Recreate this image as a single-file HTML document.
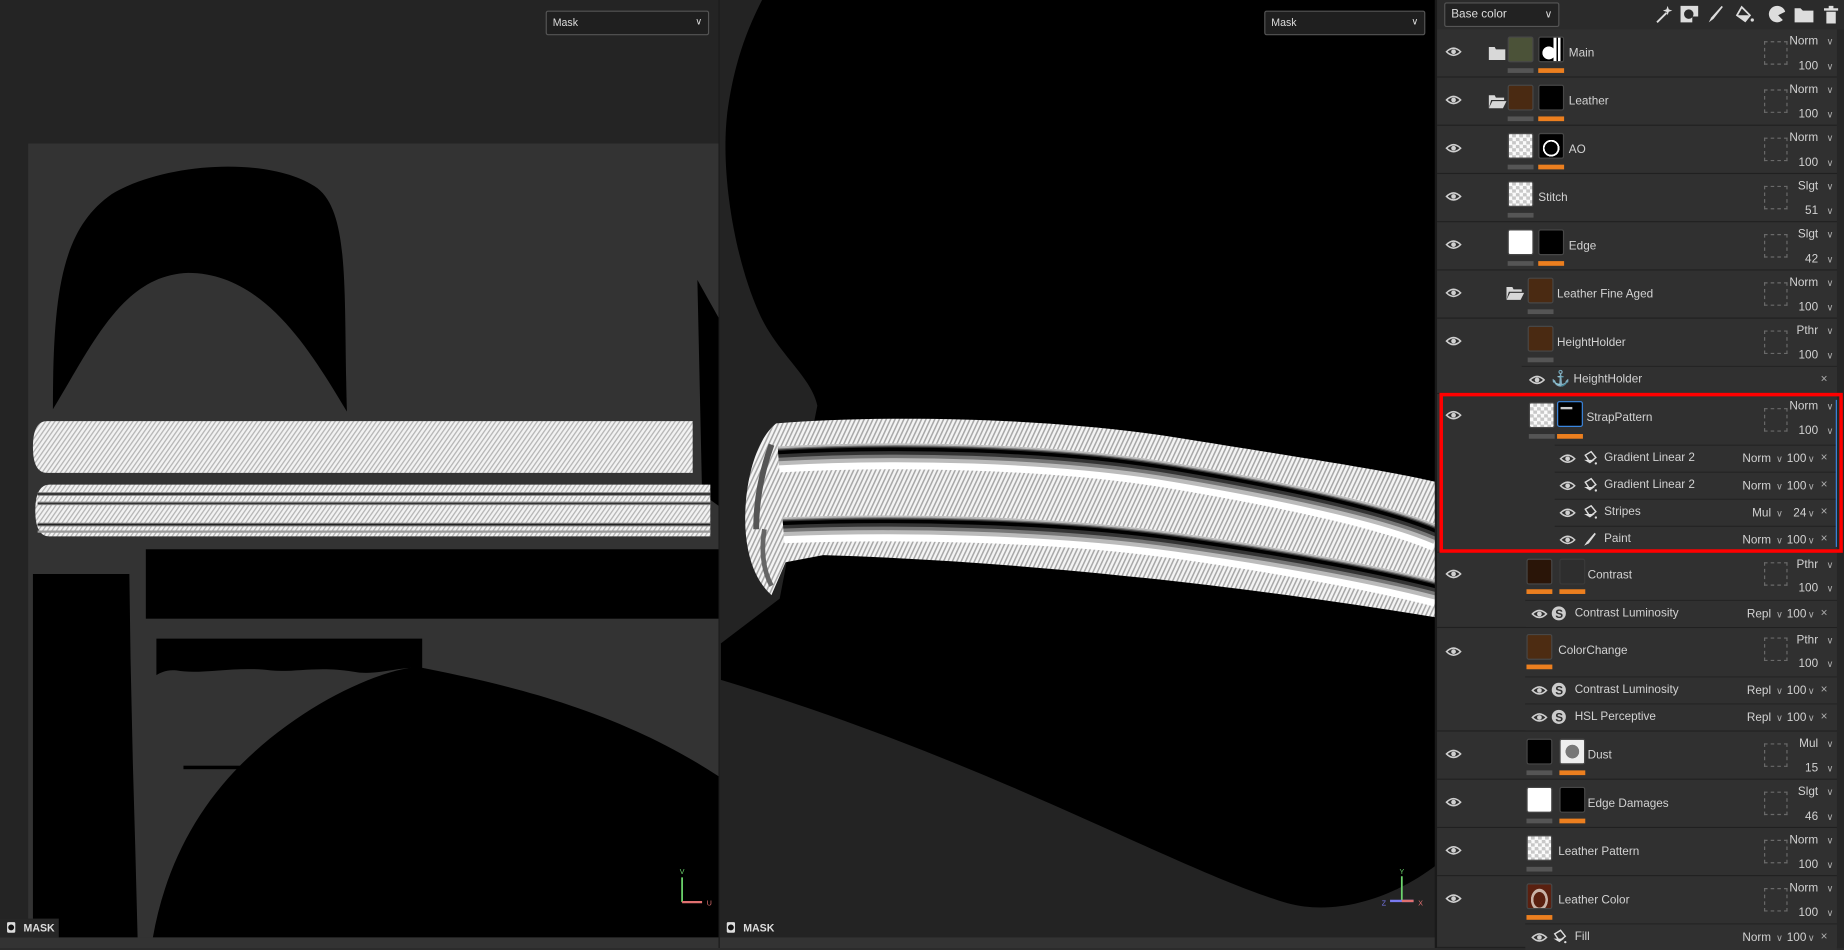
<!DOCTYPE html>
<html><head><meta charset="utf-8"><style>
*{margin:0;padding:0;box-sizing:border-box}
html,body{width:1844px;height:948px;overflow:hidden;background:#2b2b2b}
#root{position:absolute;left:0;top:0;width:1568px;height:806px;transform:scale(1.17602,1.17618);transform-origin:0 0;font-family:"Liberation Sans",sans-serif;font-size:10px;color:#d2d2d2}
.a{position:absolute}
.dd{position:absolute;background:#1f1f1f;border:1px solid #555;border-radius:2px;color:#ddd;font-size:9px;padding:4px 5px}
.dd i{position:absolute;right:5px;top:4px;font-style:normal;font-size:8px}
.row{position:absolute;left:1222px;width:340px;background:#303030;border-bottom:1px solid #202020}
.row>*{position:absolute}
.th{width:22px;height:22px;top:6px;border-radius:2px;border:1px solid #474747}
.chk{background:conic-gradient(#c8c8c8 25%,#fafafa 0 50%,#c8c8c8 0 75%,#fafafa 0) 0 0/6px 6px}
.br{background:#4a2a12}
.bk{background:#000}
.wh{background:#fff}
.gb{top:33px;width:22px;height:4px;background:#555}
.ob{top:33px;width:22px;height:4px;background:#ec7f1f}
.nm{top:15px;font-size:10px}
.sq{left:278px;top:10px;width:20px;height:20px;border:1px dashed #6a6a6a}
.bl{right:16px;top:5px;font-size:10px;text-align:right}
.vl{right:16px;top:26px;font-size:10px;text-align:right}
.cv{right:3px;font-size:8px;color:#aaa}
.eye{left:7px;top:14px}
.sub{position:absolute;height:23px;border-top:1px solid #242424;background:#303030}
.sub>*{position:absolute}
.sub .n{top:5px}
.sub .b{top:6px;right:56px;text-align:right}
.sub .v{top:6px;right:26px;text-align:right}
.sub .x{top:5px;right:8px;color:#aaa}
.sub .c1{top:7px;right:46px;font-size:8px;color:#aaa}
.sub .c2{top:7px;right:19px;font-size:8px;color:#aaa}
</style></head><body><div id="root">

<!-- LEFT VIEWPORT -->
<svg class="a" style="left:0;top:0" width="612" height="806" viewBox="0 0 612 806">
<defs>
<pattern id="dg" width="3.2" height="3.2" patternUnits="userSpaceOnUse" patternTransform="rotate(35)"><rect width="3.2" height="3.2" fill="#f2f2f2"/><rect width="1.1" height="3.2" fill="#b5b5b5"/></pattern>
</defs>
<rect width="612" height="806" fill="#242424"/>
<rect x="0" y="797" width="612" height="9" fill="#333"/>
<rect x="24" y="122" width="587" height="675" fill="#333"/>
<path d="M45,348 C45,250 52,195 95,165 C140,138 230,132 270,160 C298,182 292,250 295,350 C265,300 225,232 160,232 C105,234 80,290 45,348 Z" fill="#000"/>
<path d="M593,238 L611,270 L611,430 L597,420 Z" fill="#000"/>
<path d="M40,358 L589,358 L589,402 L40,402 Q28,402 28,380 Q28,358 40,358 Z" fill="url(#dg)"/>
<path d="M42,412 L604,412 L604,456 L42,456 Q30,456 30,434 Q30,412 42,412 Z" fill="url(#dg)"/>
<g stroke-linecap="butt">
<line x1="32" y1="420" x2="604" y2="420" stroke="#777" stroke-width="3"/>
<line x1="32" y1="420" x2="604" y2="420" stroke="#222" stroke-width="1.2"/>
<line x1="32" y1="428" x2="604" y2="428" stroke="#888" stroke-width="3"/>
<line x1="32" y1="428" x2="604" y2="428" stroke="#333" stroke-width="1.2"/>
<line x1="32" y1="446" x2="604" y2="446" stroke="#777" stroke-width="3"/>
<line x1="32" y1="446" x2="604" y2="446" stroke="#222" stroke-width="1.2"/>
<line x1="32" y1="452" x2="604" y2="452" stroke="#999" stroke-width="2"/>
</g>
<rect x="124" y="467" width="487" height="59" fill="#000"/>
<path d="M28,488 L110,488 L111,560 L113,650 L115,720 L117,797 L28,797 Z" fill="#000"/>
<path d="M133,543 L359,543 L359,568 C340,566 320,575 300,571 C270,566 250,572 230,570 C200,566 170,574 150,570 C142,569 136,572 133,574 Z" fill="#000"/>
<path d="M130,797 C140,740 165,690 205,650 C255,600 320,570 355,567 C420,580 520,600 611,660 L611,797 Z" fill="#000"/>
<rect x="156" y="651" width="99" height="3" fill="#000"/>
<line x1="580" y1="746" x2="580" y2="767" stroke="#6cd46c" stroke-width="1.5"/>
<line x1="580" y1="767" x2="597" y2="767" stroke="#e07070" stroke-width="2"/>
<text x="578" y="743" fill="#6cd46c" font-size="6" font-family="Liberation Sans">V</text>
<text x="601" y="770" fill="#e07070" font-size="6" font-family="Liberation Sans">U</text>
<rect x="0" y="781" width="50" height="16" fill="#262626"/>
<rect x="6" y="784" width="7" height="9" rx="1" fill="#ddd"/><circle cx="9.5" cy="788.5" r="2.5" fill="#111"/>
<text x="20" y="792" fill="#ddd" font-size="9" font-weight="bold" font-family="Liberation Sans">MASK</text>
<rect x="611" y="0" width="1" height="806" fill="#1a1a1a"/>
</svg>
<div class="dd" style="left:464px;top:9px;width:139px;height:21px">Mask<i>&#8744;</i></div>

<!-- MIDDLE VIEWPORT -->
<svg class="a" style="left:612px;top:0" width="610" height="806" viewBox="612 0 610 806">
<defs>
<pattern id="dg2" width="3.4" height="3.4" patternUnits="userSpaceOnUse" patternTransform="rotate(25)"><rect width="3.4" height="3.4" fill="#f4f4f4"/><rect width="1.3" height="3.4" fill="#a8a8a8"/></pattern>
<clipPath id="sc"><path d="M660,360 C760,352 900,356 1000,372 C1100,388 1180,400 1222,410 L1222,525 C1100,505 900,478 700,472 L668,478 Z"/></clipPath>
</defs>
<rect x="612" y="0" width="610" height="806" fill="#232323"/>
<rect x="612" y="797" width="610" height="9" fill="#333"/>
<path d="M648,0 L1222,0 L1222,735 C1190,760 1140,780 1095,768 C1000,740 850,650 613,578 L613,547 L663,509 L680,420 L695,345 C690,320 660,300 645,265 C625,220 613,150 618,100 C624,50 638,20 648,0 Z" fill="#000"/>
<path d="M660,360 C645,372 636,400 634,430 C632,460 638,490 656,506 L668,478 C668,470 670,460 680,454 Z" fill="url(#dg2)"/>
<path d="M660,360 C760,352 900,356 1000,372 C1100,388 1180,400 1222,410 L1222,525 C1100,505 900,478 700,472 L668,478 L660,360 Z" fill="url(#dg2)"/>
<g clip-path="url(#sc)" fill="none">
<g id="gr1">
<path d="M640,392 C760,384 900,388 1000,405 C1100,422 1180,440 1222,458" stroke="#fff" stroke-width="22"/>
<path d="M640,389 C760,381 900,385 1000,402 C1100,419 1180,437 1222,455" stroke="#bbb" stroke-width="16"/>
<path d="M640,388 C760,380 900,384 1000,401 C1100,418 1180,436 1222,454" stroke="#777" stroke-width="11"/>
<path d="M640,387 C760,379 900,383 1000,400 C1100,417 1180,435 1222,453" stroke="#333" stroke-width="7"/>
<path d="M640,386 C760,378 900,382 1000,399 C1100,416 1180,434 1222,452" stroke="#000" stroke-width="3"/>
</g>
<g>
<path d="M640,452 C760,446 900,450 1000,464 C1100,478 1180,494 1222,505" stroke="#fff" stroke-width="22"/>
<path d="M640,449 C760,443 900,447 1000,461 C1100,475 1180,491 1222,502" stroke="#bbb" stroke-width="16"/>
<path d="M640,448 C760,442 900,446 1000,460 C1100,474 1180,490 1222,501" stroke="#777" stroke-width="11"/>
<path d="M640,447 C760,441 900,445 1000,459 C1100,473 1180,489 1222,500" stroke="#333" stroke-width="7"/>
<path d="M640,446 C760,440 900,444 1000,458 C1100,472 1180,488 1222,499" stroke="#000" stroke-width="3"/>
</g>
</g>
<path d="M656,378 C648,400 643,425 643,450" stroke="#555" stroke-width="5" fill="none"/>
<path d="M650,450 C647,468 649,485 656,498" stroke="#666" stroke-width="4" fill="none"/>
<line x1="1192" y1="745" x2="1192" y2="766" stroke="#6cd46c" stroke-width="1.5"/>
<line x1="1182" y1="766" x2="1202" y2="766" stroke="#7a7af0" stroke-width="2"/>
<line x1="1192" y1="766" x2="1202" y2="766" stroke="#e07070" stroke-width="2"/>
<text x="1190" y="743" fill="#6cd46c" font-size="6" font-family="Liberation Sans">Y</text>
<text x="1175" y="770" fill="#7a7af0" font-size="6" font-family="Liberation Sans">Z</text>
<text x="1206" y="770" fill="#e07070" font-size="6" font-family="Liberation Sans">X</text>
<rect x="618" y="784" width="7" height="9" rx="1" fill="#ddd"/><circle cx="621.5" cy="788.5" r="2.5" fill="#111"/>
<text x="632" y="792" fill="#ddd" font-size="9" font-weight="bold" font-family="Liberation Sans">MASK</text>
<rect x="1220" y="0" width="2" height="806" fill="#1a1a1a"/>
</svg>
<div class="dd" style="left:1075px;top:9px;width:137px;height:21px">Mask<i>&#8744;</i></div>

<!-- RIGHT PANEL -->
<div class="a" style="left:1222px;top:0;width:346px;height:806px;background:#2b2b2b"></div>
<div class="a" style="left:1562px;top:25px;width:6px;height:781px;background:#262626"></div>
<div class="dd" style="left:1228px;top:2px;width:98px;height:21px;font-size:10px;padding:4px 5px;background:#222">Base color<i style="font-size:9px">&#8744;</i></div>
<svg class="a" style="left:1405px;top:3px" width="160" height="18" viewBox="0 0 160 18" fill="#ddd">
<path d="M4,16 L12,8" stroke="#ddd" stroke-width="1.6"/><path d="M13,2 l1,3 3,1 -3,1 -1,3 -1,-3 -3,-1 3,-1z"/>
<path d="M24,2 h15 v9 h-5 v5 h-10z"/><circle cx="31" cy="9" r="4" fill="#2b2b2b"/>
<path d="M48,16 l2,-4 9,-10 1,1 -8,10z"/>
<path d="M76,3 l7,7 -4,5 -7,-5z" fill="none" stroke="#ddd" stroke-width="1.5"/><path d="M73,10 l9,0 -3,5z"/><circle cx="85" cy="14" r="1.4"/>
<path d="M106,2 a7,7 0 1 0 5,12 l-4,-4 6,-3 a7,7 0 0 0 -7,-5z"/>
<path d="M121,4 h5 l2,2 h9 v10 h-16z"/>
<path d="M146,4 h12 v2 h-12z M148,7 h8 v10 h-8z M150,2 h4 v2 h-4z"/>
</svg>

<svg width="0" height="0" style="position:absolute"><defs>
<g id="eye"><path d="M1,5 Q7,-1 13,5 Q7,11 1,5 Z" fill="none" stroke="#cfcfcf" stroke-width="1.3"/><circle cx="7" cy="5" r="2" fill="#cfcfcf"/></g>
<g id="fill"><path d="M3,4 l5,-3 4,5 -5,4z" fill="none" stroke="#ddd" stroke-width="1.2"/><path d="M2,8 h9 l-4,3z" fill="#ddd"/><circle cx="12" cy="11" r="1" fill="#ddd"/></g>
<g id="brush"><path d="M2,12 l2,-3 7,-8 1,1 -6,8z" fill="#ddd"/></g>
<g id="flt"><circle cx="6.5" cy="6.5" r="6" fill="#ccc"/><text x="3.5" y="10.5" font-size="10" font-weight="bold" fill="#303030" font-family="Liberation Sans">S</text></g>
<g id="fold"><path d="M1,2 h5 l1,2 h8 v9 h-14z" fill="#d8d8d8"/></g>
<g id="ofold"><path d="M1,2 h5 l1,2 h7 v2 h-11 l-2,7z" fill="#d8d8d8"/><path d="M4,7 h12 l-3,6 h-12z" fill="#d8d8d8"/></g>
</defs></svg>

<!-- Main -->
<div class="row" style="top:25px;height:41px">
<svg class="eye" width="14" height="10"><use href="#eye"/></svg>
<svg style="left:43px;top:13px" width="16" height="14"><use href="#fold"/></svg>
<div class="th" style="left:60px;background:#4b5238"></div><div class="gb" style="left:60px"></div>
<div class="th bk" style="left:86px;background:radial-gradient(circle at 40% 65%,#fff 30%,transparent 32%),linear-gradient(90deg,#000 60%,#fff 60% 72%,#000 72% 80%,#fff 80% 90%,#000 90%);"></div><div class="ob" style="left:86px"></div>
<div class="nm" style="left:112px">Main</div>
<div class="sq"></div><div class="bl">Norm</div><div class="vl">100</div>
<div class="cv" style="top:6px">&#8744;</div><div class="cv" style="top:27px">&#8744;</div>
</div>
<!-- Leather -->
<div class="row" style="top:66px;height:41px">
<svg class="eye" width="14" height="10"><use href="#eye"/></svg>
<svg style="left:43px;top:13px" width="17" height="14"><use href="#ofold"/></svg>
<div class="th br" style="left:60px"></div><div class="gb" style="left:60px"></div>
<div class="th bk" style="left:86px"></div><div class="ob" style="left:86px"></div>
<div class="nm" style="left:112px">Leather</div>
<div class="sq"></div><div class="bl">Norm</div><div class="vl">100</div>
<div class="cv" style="top:6px">&#8744;</div><div class="cv" style="top:27px">&#8744;</div>
</div>
<!-- AO -->
<div class="row" style="top:107px;height:41px">
<svg class="eye" width="14" height="10"><use href="#eye"/></svg>
<div class="th chk" style="left:60px"></div><div class="gb" style="left:60px"></div>
<div class="th" style="left:86px;background:radial-gradient(circle at 50% 60%,#000 35%,#fff 36% 45%,#000 46%)"></div><div class="ob" style="left:86px"></div>
<div class="nm" style="left:112px">AO</div>
<div class="sq"></div><div class="bl">Norm</div><div class="vl">100</div>
<div class="cv" style="top:6px">&#8744;</div><div class="cv" style="top:27px">&#8744;</div>
</div>
<!-- Stitch -->
<div class="row" style="top:148px;height:41px">
<svg class="eye" width="14" height="10"><use href="#eye"/></svg>
<div class="th chk" style="left:60px"></div><div class="gb" style="left:60px"></div>
<div class="nm" style="left:86px">Stitch</div>
<div class="sq"></div><div class="bl">Slgt</div><div class="vl">51</div>
<div class="cv" style="top:6px">&#8744;</div><div class="cv" style="top:27px">&#8744;</div>
</div>
<!-- Edge -->
<div class="row" style="top:189px;height:41px">
<svg class="eye" width="14" height="10"><use href="#eye"/></svg>
<div class="th wh" style="left:60px"></div><div class="gb" style="left:60px"></div>
<div class="th bk" style="left:86px"></div><div class="ob" style="left:86px"></div>
<div class="nm" style="left:112px">Edge</div>
<div class="sq"></div><div class="bl">Slgt</div><div class="vl">42</div>
<div class="cv" style="top:6px">&#8744;</div><div class="cv" style="top:27px">&#8744;</div>
</div>
<!-- Leather Fine Aged -->
<div class="row" style="top:230px;height:41px">
<svg class="eye" width="14" height="10"><use href="#eye"/></svg>
<svg style="left:58px;top:12px" width="17" height="14"><use href="#ofold"/></svg>
<div class="th br" style="left:77px"></div><div class="gb" style="left:77px"></div>
<div class="nm" style="left:102px">Leather Fine Aged</div>
<div class="sq"></div><div class="bl">Norm</div><div class="vl">100</div>
<div class="cv" style="top:6px">&#8744;</div><div class="cv" style="top:27px">&#8744;</div>
</div>
<!-- HeightHolder -->
<div class="row" style="top:271px;height:64px">
<svg class="eye" width="14" height="10"><use href="#eye"/></svg>
<div class="th br" style="left:77px"></div><div class="gb" style="left:77px"></div>
<div class="nm" style="left:102px">HeightHolder</div>
<div class="sq"></div><div class="bl">Pthr</div><div class="vl">100</div>
<div class="cv" style="top:6px">&#8744;</div><div class="cv" style="top:27px">&#8744;</div>
<div class="sub" style="left:72px;top:40px;width:268px">
<svg style="left:6px;top:6px" width="14" height="10"><use href="#eye"/></svg>
<div style="left:25px;top:2px;font-size:13px;color:#ddd">&#9875;</div>
<div class="n" style="left:44px">HeightHolder</div>
<div class="x">&#215;</div>
</div>
</div>
<!-- StrapPattern -->
<div class="row" style="top:335px;height:135px">
<svg class="eye" style="top:13px" width="14" height="10"><use href="#eye"/></svg>
<div class="th chk" style="left:78px;top:7px"></div><div class="gb" style="left:78px;top:34px"></div>
<div class="th bk" style="left:102px;top:6px;border:1px solid #3a86e0"></div><div class="ob" style="left:102px;top:34px"></div>
<div class="a" style="left:105px;top:11px;width:10px;height:2px;background:#ccc"></div>
<div class="nm" style="left:127px;top:15px">StrapPattern</div>
<div class="sq" style="top:12px"></div><div class="bl">Norm</div><div class="vl">100</div>
<div class="cv" style="top:6px">&#8744;</div><div class="cv" style="top:27px">&#8744;</div>
<div class="sub" style="left:100px;top:43px;width:240px">
<svg style="left:4px;top:6px" width="14" height="10"><use href="#eye"/></svg><svg style="left:23px;top:4px" width="14" height="14"><use href="#fill"/></svg>
<div class="n" style="left:42px">Gradient Linear 2</div><div class="b">Norm</div><div class="c1">&#8744;</div><div class="v">100</div><div class="c2">&#8744;</div><div class="x">&#215;</div></div>
<div class="sub" style="left:100px;top:66px;width:240px">
<svg style="left:4px;top:6px" width="14" height="10"><use href="#eye"/></svg><svg style="left:23px;top:4px" width="14" height="14"><use href="#fill"/></svg>
<div class="n" style="left:42px">Gradient Linear 2</div><div class="b">Norm</div><div class="c1">&#8744;</div><div class="v">100</div><div class="c2">&#8744;</div><div class="x">&#215;</div></div>
<div class="sub" style="left:100px;top:89px;width:240px">
<svg style="left:4px;top:6px" width="14" height="10"><use href="#eye"/></svg><svg style="left:23px;top:4px" width="14" height="14"><use href="#fill"/></svg>
<div class="n" style="left:42px">Stripes</div><div class="b">Mul</div><div class="c1">&#8744;</div><div class="v">24</div><div class="c2">&#8744;</div><div class="x">&#215;</div></div>
<div class="sub" style="left:100px;top:112px;width:240px">
<svg style="left:4px;top:6px" width="14" height="10"><use href="#eye"/></svg><svg style="left:23px;top:4px" width="14" height="14"><use href="#brush"/></svg>
<div class="n" style="left:42px">Paint</div><div class="b">Norm</div><div class="c1">&#8744;</div><div class="v">100</div><div class="c2">&#8744;</div><div class="x">&#215;</div></div>
</div>
<div class="a" style="left:1561px;top:340px;width:1px;height:125px;background:#3a86e0"></div>
<!-- Contrast -->
<div class="row" style="top:470px;height:64px">
<svg class="eye" style="top:13px" width="14" height="10"><use href="#eye"/></svg>
<div class="th" style="left:76px;top:5px;background:#2a1508"></div><div class="ob" style="left:76px;top:31px"></div>
<div class="th" style="left:104px;top:5px;background:#2e2e2e;border-color:#3a3a3a"></div><div class="ob" style="left:104px;top:31px"></div>
<div class="nm" style="left:128px;top:14px">Contrast</div>
<div class="sq" style="top:8px"></div><div class="bl">Pthr</div><div class="vl" style="top:25px">100</div>
<div class="cv" style="top:6px">&#8744;</div><div class="cv" style="top:26px">&#8744;</div>
<div class="sub" style="left:75px;top:40px;width:265px">
<svg style="left:5px;top:6px" width="14" height="10"><use href="#eye"/></svg><svg style="left:22px;top:4px" width="14" height="14"><use href="#flt"/></svg>
<div class="n" style="left:42px">Contrast Luminosity</div><div class="b">Repl</div><div class="c1">&#8744;</div><div class="v">100</div><div class="c2">&#8744;</div><div class="x">&#215;</div></div>
</div>
<!-- ColorChange -->
<div class="row" style="top:534px;height:88px">
<svg class="eye" style="top:15px" width="14" height="10"><use href="#eye"/></svg>
<div class="th br" style="left:76px;top:5px;background:#4d2c12"></div><div class="ob" style="left:76px;top:31px"></div>
<div class="nm" style="left:103px;top:14px">ColorChange</div>
<div class="sq" style="top:8px"></div><div class="bl">Pthr</div><div class="vl" style="top:25px">100</div>
<div class="cv" style="top:6px">&#8744;</div><div class="cv" style="top:26px">&#8744;</div>
<div class="sub" style="left:75px;top:41px;width:265px">
<svg style="left:5px;top:6px" width="14" height="10"><use href="#eye"/></svg><svg style="left:22px;top:4px" width="14" height="14"><use href="#flt"/></svg>
<div class="n" style="left:42px">Contrast Luminosity</div><div class="b">Repl</div><div class="c1">&#8744;</div><div class="v">100</div><div class="c2">&#8744;</div><div class="x">&#215;</div></div>
<div class="sub" style="left:75px;top:64px;width:265px">
<svg style="left:5px;top:6px" width="14" height="10"><use href="#eye"/></svg><svg style="left:22px;top:4px" width="14" height="14"><use href="#flt"/></svg>
<div class="n" style="left:42px">HSL Perceptive</div><div class="b">Repl</div><div class="c1">&#8744;</div><div class="v">100</div><div class="c2">&#8744;</div><div class="x">&#215;</div></div>
</div>
<!-- Dust -->
<div class="row" style="top:622px;height:41px">
<svg class="eye" width="14" height="10"><use href="#eye"/></svg>
<div class="th bk" style="left:76px"></div><div class="gb" style="left:76px"></div>
<div class="th" style="left:104px;background:radial-gradient(circle,#777 40%,#eee 42%)"></div><div class="ob" style="left:104px"></div>
<div class="nm" style="left:128px">Dust</div>
<div class="sq"></div><div class="bl">Mul</div><div class="vl">15</div>
<div class="cv" style="top:6px">&#8744;</div><div class="cv" style="top:27px">&#8744;</div>
</div>
<!-- Edge Damages -->
<div class="row" style="top:663px;height:41px">
<svg class="eye" width="14" height="10"><use href="#eye"/></svg>
<div class="th wh" style="left:76px"></div><div class="gb" style="left:76px"></div>
<div class="th bk" style="left:104px"></div><div class="ob" style="left:104px"></div>
<div class="nm" style="left:128px">Edge Damages</div>
<div class="sq"></div><div class="bl">Slgt</div><div class="vl">46</div>
<div class="cv" style="top:6px">&#8744;</div><div class="cv" style="top:27px">&#8744;</div>
</div>
<!-- Leather Pattern -->
<div class="row" style="top:704px;height:41px">
<svg class="eye" width="14" height="10"><use href="#eye"/></svg>
<div class="th chk" style="left:76px"></div><div class="gb" style="left:76px"></div>
<div class="nm" style="left:103px">Leather Pattern</div>
<div class="sq"></div><div class="bl">Norm</div><div class="vl">100</div>
<div class="cv" style="top:6px">&#8744;</div><div class="cv" style="top:27px">&#8744;</div>
</div>
<!-- Leather Color -->
<div class="row" style="top:745px;height:61px">
<svg class="eye" width="14" height="10"><use href="#eye"/></svg>
<div class="th" style="left:76px;background:radial-gradient(ellipse at 50% 65%,#5a2010 35%,#c9b3a8 37% 50%,#5a2010 52%)"></div><div class="ob" style="left:76px"></div>
<div class="nm" style="left:103px">Leather Color</div>
<div class="sq"></div><div class="bl">Norm</div><div class="vl">100</div>
<div class="cv" style="top:6px">&#8744;</div><div class="cv" style="top:27px">&#8744;</div>
<div class="sub" style="left:75px;top:40px;width:265px">
<svg style="left:5px;top:6px" width="14" height="10"><use href="#eye"/></svg><svg style="left:22px;top:4px" width="14" height="14"><use href="#fill"/></svg>
<div class="n" style="left:42px">Fill</div><div class="b">Norm</div><div class="c1">&#8744;</div><div class="v">100</div><div class="c2">&#8744;</div><div class="x">&#215;</div></div>
</div>

<div class="a" style="left:1224px;top:334px;width:343px;height:136px;border:3px solid #ff0000"></div>
</div></body></html>
